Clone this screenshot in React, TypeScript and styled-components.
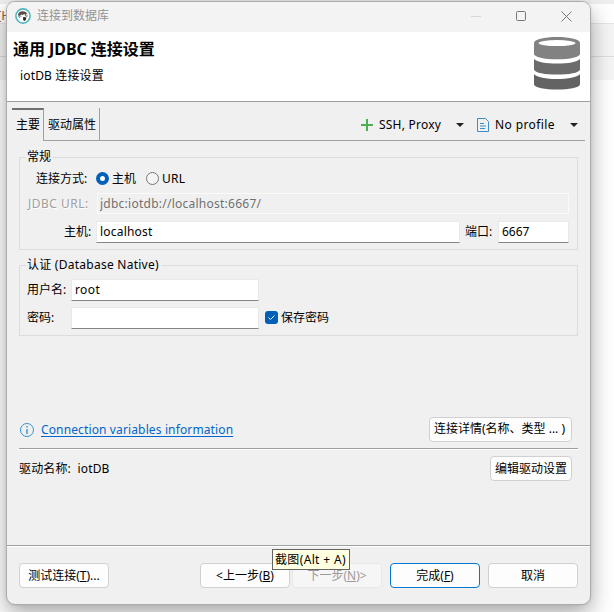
import React from "react";
import styled, { createGlobalStyle, css } from "styled-components";

const Global = createGlobalStyle`
  * { box-sizing: border-box; }
  body { margin: 0; overflow: hidden; }
  body, button, input {
    font-family: "Noto Sans", "Noto Sans CJK SC", sans-serif;
    font-size: 12px;
    color: #000;
  }
`;

const Desktop = styled.div`
  position: relative;
  width: 614px;
  height: 612px;
  padding: 1px 0 0 6px;
  overflow: hidden;
  background: linear-gradient(
    #eeeeee 0 4px, #ffffff 4px 23px, #e6e6e6 23px 24px, #f5f5f5 24px 56px,
    #dddddd 56px 57px, #f5f5f5 57px 80px, #ffffff 80px
  );
`;

const Behind = styled.span`
  position: absolute;
  left: -3px;
  top: 6px;
  font-size: 13px;
  line-height: 18px;
  color: #a0603c;
`;

const Dialog = styled.main`
  position: relative;
  display: flex;
  flex-direction: column;
  width: 585px;
  height: 604px;
  border: 1px solid #acacac;
  border-radius: 9px;
  overflow: hidden;
  background: #f0f0f0;
  box-shadow: 0 9px 22px rgba(0, 0, 0, 0.34), 0 0 3px rgba(0, 0, 0, 0.1);
`;

const Text = styled.span<{ $ls?: number; $w?: number }>`
  display: block;
  flex: none;
  white-space: pre;
  line-height: 18px;
  letter-spacing: ${(p) => p.$ls ?? 0}px;
  ${(p) => p.$w && css`width: ${p.$w}px;`}
`;

const TitleBar = styled.header`
  display: flex;
  align-items: center;
  height: 30px;
  flex: none;
  padding: 0 18px 2px 8px;
  background: #f3f3f3;
`;

const Title = styled(Text)`
  margin-left: 6px;
  flex: 1;
  color: #929292;
`;

const WindowControls = styled.div`
  display: flex;
  gap: 34px;
  align-items: center;
`;

const Banner = styled.section`
  display: flex;
  justify-content: space-between;
  flex: none;
  height: 70px;
  padding: 5px 10px 0 6px;
  background: #fff;
  border-bottom: 1px solid #a0a0a0;
`;

const Heading = styled.h1`
  margin: 1px 0 0;
  font-size: 16px;
  line-height: 22px;
  font-weight: 700;
  letter-spacing: -0.05px;
  white-space: nowrap;
`;

const Subtitle = styled(Text)`
  margin: 7px 0 0 7px;
`;

const TabBar = styled.nav`
  display: flex;
  flex: none;
  height: 33px;
  margin: 6px 5px 0;
  box-shadow: inset 0 -1px #a0a0a0;
`;

const Tab = styled.div<{ $active?: boolean; $width: number }>`
  width: ${(p) => p.$width}px;
  padding: ${(p) => (p.$active ? "6px 0 0 4px" : "8px 0 0 4px")};
  border-right: 1px solid #a0a0a0;
  ${(p) => p.$active && css`
    border-top: 2px solid #707070;
    background: #f0f0f0;
  `}
`;

const Tools = styled.div`
  display: flex;
  align-items: center;
  margin-left: auto;
  padding: 0 7px 0 0;
`;

const Caret = styled.i<{ $left: number }>`
  margin-left: ${(p) => p.$left}px;
  border: 4px solid transparent;
  border-top-color: #222;
  border-bottom: 0;
`;

const Group = styled.fieldset<{ $height: number; $top: number }>`
  display: flex;
  flex-direction: column;
  flex: none;
  height: ${(p) => p.$height}px;
  min-width: 0;
  margin: ${(p) => p.$top}px 12px 0;
  padding: 0 8px 0 7px;
  border: 1px solid #dcdcdc;
`;

const Legend = styled.legend`
  height: 18px;
  padding: 0 2px 0 1px;
  margin-left: -1px;
`;

const Row = styled.div<{ $height: number; $left?: number }>`
  display: flex;
  align-items: center;
  flex: none;
  height: ${(p) => p.$height}px;
  padding-left: ${(p) => p.$left ?? 0}px;
`;

const Radio = styled.span<{ $on?: boolean }>`
  width: 13px;
  height: 13px;
  border-radius: 50%;
  border: ${(p) => (p.$on ? "4px solid #005fb8" : "1px solid #777")};
  background: ${(p) => (p.$on ? "#fff" : "#f5f5f5")};
`;

const Field = styled.input<{ $width: number; $readOnly?: boolean; $ls?: number }>`
  flex: none;
  width: ${(p) => p.$width}px;
  height: 22px;
  padding: 0 3px;
  border: 1px solid #e9e9e9;
  border-bottom-color: #858585;
  border-radius: 1px;
  outline: 0;
  background: #fff;
  letter-spacing: ${(p) => p.$ls ?? 0}px;
  ${(p) => p.$readOnly && css`
    height: 21px;
    padding: 0 2px 1px;
    background: #f0f0f0;
    border-color: #fafafa;
    color: #707070;
  `}
`;

const DisabledLabel = styled(Text)`
  color: #a0a0a0;
  text-shadow: 1px 1px #fff;
`;

const CheckBox = styled.span`
  display: flex;
  align-items: center;
  justify-content: center;
  width: 13px;
  height: 13px;
  margin: 0 3px 0 6px;
  border-radius: 3px;
  background: #005fb8;
`;

const InfoRow = styled.div`
  display: flex;
  align-items: center;
  flex: none;
  height: 25px;
  margin: 81px 18px 0 13px;
`;

const LinkText = styled(Text)`
  margin-left: 7px;
  margin-right: auto;
  color: #0066cc;
  text-decoration: underline;
  text-underline-offset: 2px;
`;

const DriverRow = styled.div`
  display: flex;
  justify-content: space-between;
  align-items: center;
  flex: none;
  height: 40px;
  margin: 6px 12px 0;
  padding: 0 6px 0 0;
  border-top: 1px solid #a0a0a0;
  box-shadow: inset 0 1px #fff;
`;

const Button = styled.button<{ $width: number; $primary?: boolean; $low?: boolean }>`
  flex: none;
  width: ${(p) => p.$width}px;
  height: 25px;
  padding: ${(p) => (p.$low ? "1px 0 0" : "0 2px 1px 0")};
  border: 1px solid ${(p) => (p.$primary ? "#0078d4" : "#d0d0d0")};
  border-radius: 4px;
  background: #fdfdfd;
  line-height: 18px;
  white-space: pre;
  &:disabled {
    color: #9a9a9a;
    background: #f6f6f6;
    border-color: #e8e8e8;
  }
`;

const Footer = styled.footer`
  display: flex;
  margin-top: auto;
  flex: none;
  height: 59px;
  padding: 17px 12px 0;
  border-top: 1px solid #a0a0a0;
  box-shadow: inset 0 1px #fff;
`;

const Steps = styled.div`
  display: flex;
  gap: 2px;
  margin: 0 8px 0 auto;
`;

const Tooltip = styled.div`
  position: absolute;
  left: 272px;
  top: 549px;
  width: 78px;
  height: 21px;
  padding-left: 2px;
  border: 1px solid #646464;
  background: #ffffe1;
  line-height: 20px;
  letter-spacing: 0.35px;
  white-space: pre;
`;

const Gap = styled.span<{ $w: number }>`
  flex: none;
  width: ${(p) => p.$w}px;
`;

const AppIcon = () => (
  <svg width="16" height="16" viewBox="0 0 16 16">
    <circle cx="8" cy="8" r="7.1" fill="#fff" stroke="#4fb5bf" strokeWidth="1.6" />
    <path d="M3 7.200C3 4.800 5 3.200 7.600 3.200c2.600 0 4.600 1.300 5 3.600l-1.200-.7-.8.900-1.500-1-1.300 1-1.700-.6-1.200 1.500-.9-.4z" fill="#5a4b45" />
    <path d="M3.600 7.500l.9 2.300M5.200 8.200h1.200M9.800 7.400l1.300.5M12 7.200l-.3 2" stroke="#5a4b45" strokeWidth=".9" fill="none" />
    <path d="M8 9.200l2.500-.2.800 1.800-1.300 2.200-1.800-.8z" fill="#2c2422" />
  </svg>
);

const DatabaseIcon = () => (
  <svg width="46" height="54" viewBox="0 0 46 54">
    <path d="M0 6C0 2.400 10 0 23 0s23 2.400 23 6v11c0 3-10 5.300-23 5.300S0 20 0 17z" fill="#828282" />
    <ellipse cx="23" cy="6.100" rx="18.500" ry="3" fill="#fff" />
    <path d="M0 22c3 3 12 4.600 23 4.600S43 25 46 22v10.500C45 36 35 37.600 23 37.600S1 36 0 32.500z" fill="#6c6c6c" />
    <path d="M0 37.200c3 3 12 4.800 23 4.800s20-1.800 23-4.800v10.400C45 51.100 35 52.600 23 52.600S1 51.100 0 47.600z" fill="#636363" />
  </svg>
);

export default function App() {
  return (
    <>
      <Global />
      <Desktop>
        <Behind>[H</Behind>
        <Dialog>
          <TitleBar>
            <AppIcon />
            <Title>连接到数据库</Title>
            <WindowControls>
              <svg width="11" height="11"><path d="M0 5.500h10" stroke="#d8d8d8" /></svg>
              <svg width="11" height="11"><rect x=".5" y=".5" width="9" height="9" rx="1" fill="none" stroke="#777" /></svg>
              <svg width="11" height="11"><path d="M.5 .5l10 10M10.500 .5l-10 10" stroke="#777" /></svg>
            </WindowControls>
          </TitleBar>

          <Banner>
            <div>
              <Heading>通用 JDBC 连接设置</Heading>
              <Subtitle $ls={0.15}>iotDB 连接设置</Subtitle>
            </div>
            <DatabaseIcon />
          </Banner>

          <TabBar>
            <Tab $active $width={32}><Text>主要</Text></Tab>
            <Tab $width={56}><Text>驱动属性</Text></Tab>
            <Tools>
              <svg width="12" height="12"><path d="M6 0v12M0 6h12" stroke="#4caf50" strokeWidth="2" /></svg>
              <Gap $w={6} />
              <Text $w={62} $ls={0.22}>SSH, Proxy</Text>
              <Caret $left={15} />
              <Gap $w={13} />
              <svg width="12" height="14" fill="none" stroke="#3a8fcb">
                <path d="M.5 .5h8l3 3v10H.5zM3 5.500h4M3 8h6M3 10.500h5" />
              </svg>
              <Gap $w={6} />
              <Text $w={60} $ls={0.4}>No profile</Text>
              <Caret $left={15} />
            </Tools>
          </TabBar>

          <Group $height={102} $top={7}>
            <Legend><Text>常规</Text></Legend>
            <Row $height={25} $left={9}>
              <Text $w={60}>连接方式:</Text>
              <Radio $on />
              <Gap $w={3} />
              <Text $w={34}>主机</Text>
              <Radio />
              <Gap $w={3} />
              <Text $ls={0.2}>URL</Text>
            </Row>
            <Row $height={25} $left={1}>
              <DisabledLabel $w={69} $ls={0.5}>JDBC URL:</DisabledLabel>
              <Field $width={472} $readOnly $ls={0.25} readOnly defaultValue="jdbc:iotdb://localhost:6667/" />
            </Row>
            <Row $height={31} $left={37}>
              <Text $w={32}>主机:</Text>
              <Field $width={364} $ls={0.2} defaultValue="localhost" />
              <Gap $w={5} />
              <Text $w={33}>端口:</Text>
              <Field $width={71} defaultValue="6667" />
            </Row>
          </Group>

          <Group $height={80} $top={6}>
            <Legend><Text $ls={0.25}>认证 (Database Native)</Text></Legend>
            <Row $height={31}>
              <Text $w={44}>用户名:</Text>
              <Field $width={188} $ls={0.4} defaultValue="root" />
            </Row>
            <Row $height={25}>
              <Text $w={44}>密码:</Text>
              <Field $width={188} />
              <CheckBox>
                <svg width="9" height="9"><path d="M1.500 4.500l2 2 4-4" fill="none" stroke="#fff" /></svg>
              </CheckBox>
              <Text>保存密码</Text>
            </Row>
          </Group>

          <InfoRow>
            <svg width="14" height="14" fill="none" stroke="#3a92cb">
              <circle cx="7" cy="7" r="6.500" />
              <path d="M7 6v5M7 3v1.500" strokeWidth="1.400" />
            </svg>
            <LinkText $ls={0.13}>Connection variables information</LinkText>
            <Button $width={143}>连接详情(名称、类型 ... )</Button>
          </InfoRow>
          <DriverRow>
            <Text $ls={0.15}>驱动名称:  iotDB</Text>
            <Button $width={82} $low>编辑驱动设置</Button>
          </DriverRow>

          <Footer>
            <Button $width={90} $low>测试连接(<u>T</u>)...</Button>
            <Steps>
              <Button $width={90} $low>&lt;上一步(<u>B</u>)</Button>
              <Button $width={90} $low disabled>下一步(<u>N</u>)&gt;</Button>
            </Steps>
            <Button $width={90} $low $primary>完成(<u>F</u>)</Button>
            <Gap $w={8} />
            <Button $width={90} $low>取消</Button>
          </Footer>
        </Dialog>
        <Tooltip>截图(Alt + A)</Tooltip>
      </Desktop>
    </>
  );
}
